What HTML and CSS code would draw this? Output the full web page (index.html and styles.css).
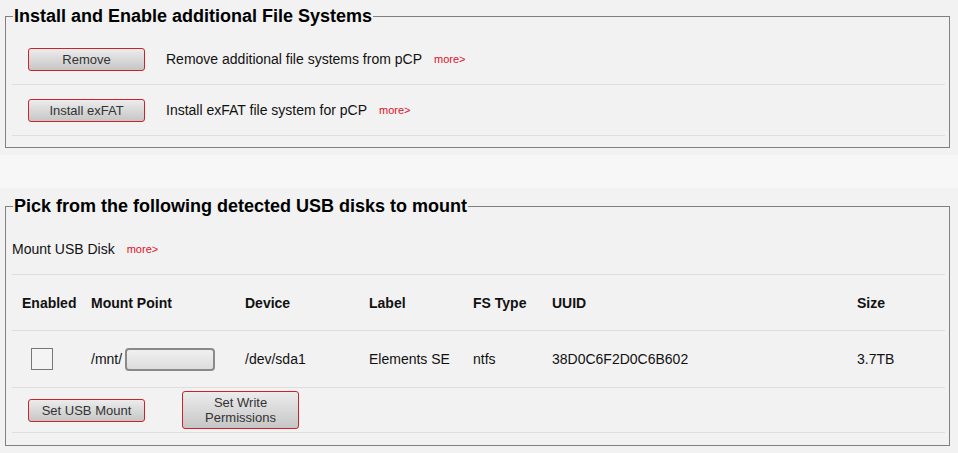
FILE: index.html
```html
<!DOCTYPE html>
<html lang="en">
<head>
    <meta charset="UTF-8">
    <meta name="viewport" content="width=device-width, initial-scale=1.0">
    <title>Extensions - File Systems</title>
    <link rel="stylesheet" href="styles.css">
</head>
<body>
    <div class="section section-fs">
        <fieldset>
            <legend>Install and Enable additional File Systems</legend>
            <div class="row">
                <button class="btn">Remove</button>
                <span class="desc">Remove additional file systems from pCP</span>
                <a class="more" href="#">more&gt;</a>
            </div>
            <div class="row">
                <button class="btn">Install exFAT</button>
                <span class="desc">Install exFAT file system for pCP</span>
                <a class="more" href="#">more&gt;</a>
            </div>
        </fieldset>
    </div>

    <div class="section section-usb">
        <fieldset>
            <legend>Pick from the following detected USB disks to mount</legend>
            <div class="row row-plain">
                <span>Mount USB Disk</span>
                <a class="more" href="#">more&gt;</a>
            </div>
            <table class="disks">
                <colgroup>
                    <col style="width: 69px">
                    <col style="width: 154px">
                    <col style="width: 124px">
                    <col style="width: 104px">
                    <col style="width: 79px">
                    <col style="width: 305px">
                    <col>
                </colgroup>
                <tr class="head">
                    <th>Enabled</th>
                    <th>Mount Point</th>
                    <th>Device</th>
                    <th>Label</th>
                    <th>FS Type</th>
                    <th>UUID</th>
                    <th>Size</th>
                </tr>
                <tr class="disk">
                    <td><input type="checkbox" class="check"></td>
                    <td><span class="mount-point">/mnt/<input type="text" class="mount"></span></td>
                    <td>/dev/sda1</td>
                    <td>Elements SE</td>
                    <td>ntfs</td>
                    <td>38D0C6F2D0C6B602</td>
                    <td>3.7TB</td>
                </tr>
            </table>
            <div class="row row-actions">
                <button class="btn">Set USB Mount</button>
                <button class="btn btn-tall">Set Write<br>Permissions</button>
            </div>
        </fieldset>
    </div>
</body>
</html>
```

FILE: styles.css
```css
body {
    margin: 0;
    background-color: #f7f7f7;
    font-family: "Liberation Sans", Arial, sans-serif;
    font-size: 14px;
    color: #111;
}

.section {
    background-color: #f2f2f2;
    padding: 5px 8px 7px 5px;
}

.section-usb {
    margin-top: 33px;
    padding-top: 7px;
    padding-bottom: 8px;
}

fieldset {
    margin: 0;
    padding: 7px 4px 11px 6px;
    border: 1px solid #808080;
}

.section-usb fieldset {
    padding-bottom: 12px;
}

legend {
    padding: 0 1px 0 1px;
    margin-left: 1px;
    font-size: 18px;
    font-weight: bold;
    line-height: 22px;
    color: #000;
}

.row {
    display: flex;
    align-items: center;
    height: 50px;
    border-bottom: 1px solid #dedede;
}

.row-actions {
    height: 44px;
    gap: 37px;
}

.btn {
    width: 117px;
    height: 23px;
    margin-left: 16px;
    padding: 0;
    border: 1px solid #cc2229;
    border-radius: 3px;
    background: linear-gradient(#ececec, #c6c6c6);
    font-family: "Liberation Sans", Arial, sans-serif;
    font-size: 13px;
    line-height: 15px;
    color: #333;
}

.row-actions .btn + .btn {
    margin-left: 0;
}

.btn-tall {
    height: 38px;
}

.desc {
    margin-left: 21px;
}

.more {
    margin-left: 12px;
    font-size: 11px;
    color: #e0102a;
    text-decoration: none;
}

.disks {
    width: 100%;
    border-collapse: collapse;
    table-layout: fixed;
}

.disks th,
.disks td {
    padding: 0 0 0 10px;
    text-align: left;
    border-bottom: 1px solid #dedede;
}

.disks .head th {
    height: 55px;
}

.disks .disk td {
    height: 56px;
}

.check {
    appearance: none;
    display: block;
    width: 22px;
    height: 22px;
    margin: 0 0 0 9px;
    border: 1px solid #777;
    background-color: #f4f4f4;
}

.mount-point {
    display: inline-flex;
    align-items: center;
}

.mount {
    width: 90px;
    height: 23px;
    box-sizing: border-box;
    margin: 0 0 0 3px;
    border: 2px solid #8a8a8a;
    border-radius: 4px;
    background: linear-gradient(#f0f0f0, #dddddd);
}
```
